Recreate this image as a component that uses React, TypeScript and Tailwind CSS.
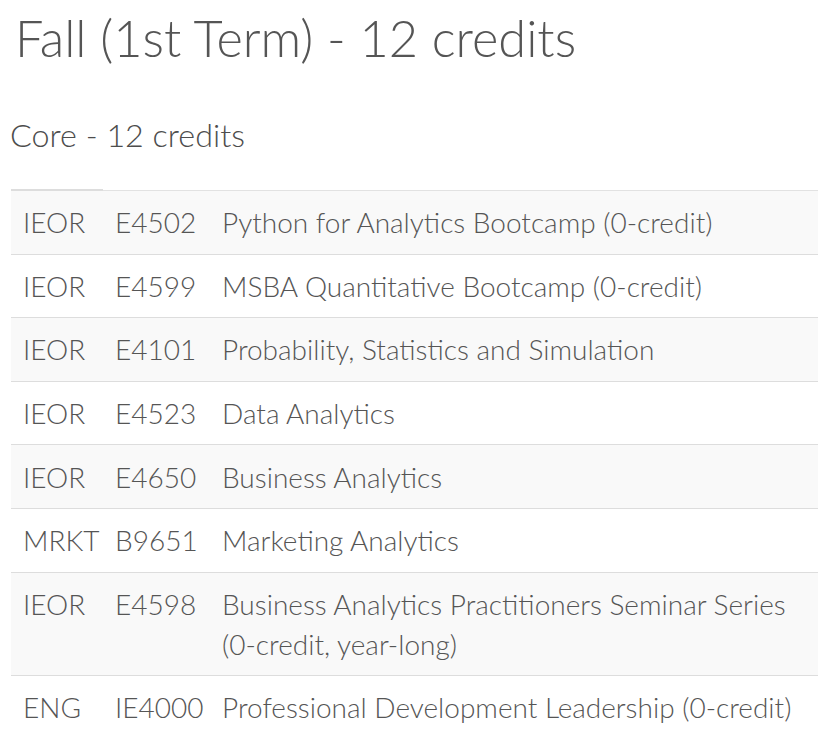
import React from "react";

type Row = { dept: string; code: string; title: React.ReactNode };

const rows: Row[] = [
  { dept: "IEOR", code: "E4502", title: "Python for Analytics Bootcamp (0-credit)" },
  { dept: "IEOR", code: "E4599", title: "MSBA Quantitative Bootcamp (0-credit)" },
  { dept: "IEOR", code: "E4101", title: "Probability, Statistics and Simulation" },
  { dept: "IEOR", code: "E4523", title: "Data Analytics" },
  { dept: "IEOR", code: "E4650", title: "Business Analytics" },
  { dept: "MRKT", code: "B9651", title: "Marketing Analytics" },
  {
    dept: "IEOR",
    code: "E4598",
    title: (
      <>
        Business Analytics Practitioners Seminar Series
        <br />
        (0-credit, year-long)
      </>
    ),
  },
  { dept: "ENG", code: "IE4000", title: "Professional Development Leadership (0-credit)" },
];

export default function App() {
  return (
    <div
      className="px-[11px] text-[#555] bg-white min-h-[745px]"
      style={{ fontFamily: '"Lato", "Open Sans", sans-serif' }}
    >
      <h1 className="pt-[7px] text-[50.5px] leading-[61px] font-light pl-[4px] whitespace-nowrap">
        Fall (1st Term) - 12 credits
      </h1>
      <h2 className="mt-[47px] text-[32.3px] leading-[39px] font-light text-[#4d4d4d] -ml-[1px] whitespace-nowrap">
        Core - 12 credits
      </h2>
      <div className="mt-[35px] w-[807px]">
        <div className="flex items-end h-[2px]">
          <div className="w-[92px] h-[2px] bg-[#ddd]" />
          <div className="flex-1 h-[1px] bg-[#e2e2e2]" />
        </div>
        {rows.map((r, i) => (
          <div
            key={i}
            className={`flex text-[28px] leading-[40px] font-light ${
              i > 0 ? "border-t border-[#ddd]" : ""
            } ${i % 2 === 0 ? "bg-[#f9f9f9]" : "bg-white"}`}
          >
            <div className="w-[92px] shrink-0 px-[12px] py-[11.3px] whitespace-nowrap">{r.dept}</div>
            <div className="w-[107px] shrink-0 px-[12px] py-[11.3px] whitespace-nowrap">{r.code}</div>
            <div className="flex-1 px-[12px] py-[11.3px] whitespace-nowrap">{r.title}</div>
          </div>
        ))}
      </div>
    </div>
  );
}
